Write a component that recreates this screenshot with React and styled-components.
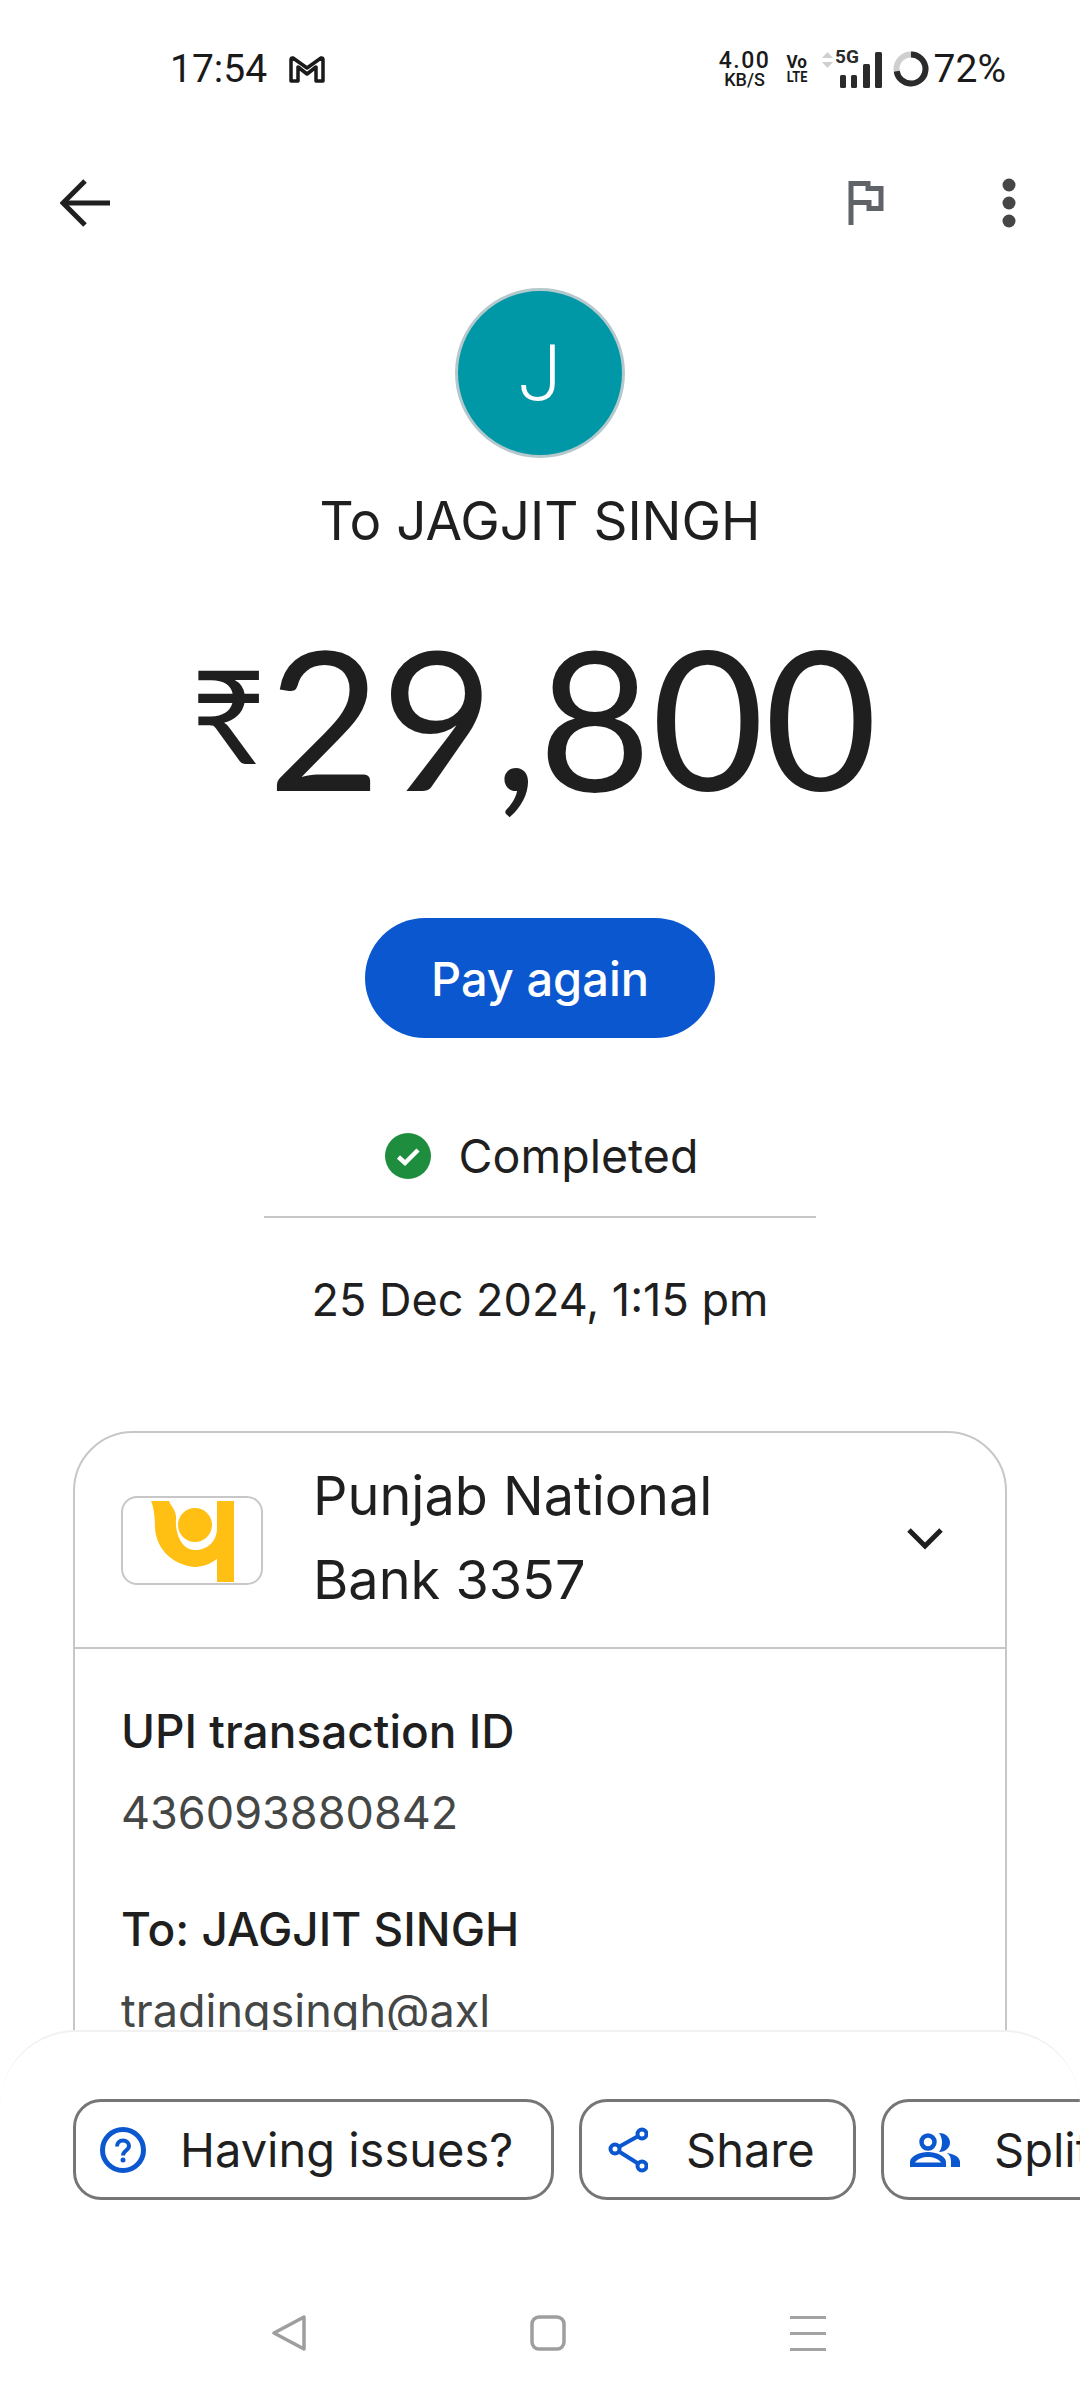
import React from 'react';
import styled, { createGlobalStyle } from 'styled-components';

const Global = createGlobalStyle`
  html, body { margin: 0; padding: 0; background: #fff; }
  body { font-family: Inter, Roboto, "Liberation Sans", sans-serif; color: #1f1f1f; }
`;

const Screen = styled.div`
  position: relative;
  width: 1080px;
  height: 2400px;
  overflow: hidden;
  background: #fff;
`;

const StatusBar = styled.div`
  height: 138px;
  padding: 0 74px 0 170px;
  box-sizing: border-box;
  display: flex;
  align-items: center;
  color: #1a1a1a;
  font-family: Roboto, sans-serif;
`;

const Clock = styled.span`
  font-size: 39px;
  margin-right: 22px;
`;

const StatusRight = styled.div`
  margin-left: auto;
  display: flex;
  align-items: center;
`;

const StackText = styled.div`
  display: flex;
  flex-direction: column;
  align-items: center;
  width: ${(p) => p.$width}px;
  margin-right: ${(p) => p.$gap}px;
`;

const StackLine = styled.span`
  font-size: ${(p) => p.$size}px;
  font-weight: ${(p) => p.$weight || 500};
  line-height: ${(p) => p.$height}px;
  letter-spacing: ${(p) => p.$spacing || 0}px;
  transform: scaleX(${(p) => p.$squeeze || 1});
`;

const Battery = styled.span`
  font-size: 39px;
  margin-left: 5px;
`;

const Toolbar = styled.div`
  height: 132px;
  padding: 0 64px 0 60px;
  box-sizing: border-box;
  display: flex;
  align-items: center;
  margin-top: -1px;
`;

const FlagButton = styled.div`
  margin-left: auto;
  margin-right: 115px;
  display: flex;
`;

const Hero = styled.div`
  display: flex;
  flex-direction: column;
  align-items: center;
  margin-top: 19px;
`;

const Avatar = styled.div`
  width: 164px;
  height: 164px;
  border-radius: 50%;
  border: 3px solid #b5c9cd;
  background: #0097a7;
  color: #fff;
  font-size: 78px;
  font-weight: 300;
  font-family: Roboto, sans-serif;
  display: flex;
  align-items: center;
  justify-content: center;
`;

const Payee = styled.div`
  margin-top: 32px;
  font-size: 53px;
  line-height: 62px;
`;

const Amount = styled.div`
  margin-top: 48px;
  height: 232px;
  padding-right: 12px;
  font-family: Lato, Roboto, sans-serif;
  font-size: 195px;
  line-height: 232px;
  color: #1f1f1f;
  display: flex;
  align-items: baseline;
`;

const Rupee = styled.span`
  font-size: 130px;
  margin-right: 2px;
  position: relative;
  top: -27px;
`;

const PayButton = styled.div`
  margin-top: 86px;
  width: 350px;
  height: 120px;
  border-radius: 60px;
  background: #0b57d0;
  color: #fff;
  font-size: 47px;
  font-weight: 500;
  display: flex;
  align-items: center;
  justify-content: center;
`;

const StatusRow = styled.div`
  margin-top: 88px;
  height: 60px;
  width: 552px;
  padding-left: 3px;
  box-sizing: border-box;
  display: flex;
  align-items: center;
  justify-content: center;
  gap: 28px;
  font-size: 46.5px;
`;

const Rule = styled.div`
  margin-top: 30px;
  width: 552px;
  height: 2px;
  background: #c7c7c7;
`;

const DateText = styled.div`
  margin-top: 54px;
  font-size: 45px;
  line-height: 56px;
`;

const Card = styled.div`
  margin: 103px 73px 0;
  height: 900px;
  box-sizing: border-box;
  border: 2px solid #c7c7c7;
  border-radius: 60px 60px 0 0;
`;

const BankRow = styled.div`
  height: 216px;
  box-sizing: border-box;
  padding: 0 62px 0 46px;
  display: flex;
  align-items: center;
  border-bottom: 2px solid #c7c7c7;
`;

const BankLogo = styled.div`
  width: 142px;
  height: 89px;
  box-sizing: border-box;
  border: 2px solid #c7c7c7;
  border-radius: 16px;
  display: flex;
  justify-content: center;
  flex-shrink: 0;
`;

const BankName = styled.div`
  margin: 0 0 4px 50px;
  width: 520px;
  font-size: 54px;
  line-height: 84px;
`;

const Chevron = styled.div`
  margin: 0 0 4px auto;
  display: flex;
`;

const Details = styled.div`
  padding: 0 46px;
`;

const DetailLabel = styled.div`
  margin-top: ${(p) => p.$top}px;
  font-size: 46px;
  font-weight: 500;
  line-height: 56px;
`;

const DetailValue = styled.div`
  margin-top: 26px;
  font-size: 45px;
  line-height: 56px;
  color: #444746;
`;

const Sheet = styled.div`
  position: absolute;
  left: 0;
  right: 0;
  top: 2030px;
  bottom: 0;
  background: #fff;
  border-top: 2px solid #f1f1f1;
  border-radius: 76px 76px 0 0;
  overflow: hidden;
`;

const Chips = styled.div`
  margin-top: 67px;
  padding-left: 73px;
  display: flex;
  gap: 25px;
  width: 1400px;
`;

const Chip = styled.div`
  height: 101px;
  width: ${(p) => p.$width}px;
  box-sizing: border-box;
  padding-left: 24px;
  border: 3px solid #747775;
  border-radius: 28px;
  display: flex;
  align-items: center;
  gap: ${(p) => p.$gap}px;
  font-size: 47px;
  flex-shrink: 0;
`;

const NavBar = styled.div`
  margin-top: 115px;
  display: flex;
  align-items: center;
  padding-left: 272px;
  gap: 224px;
`;

const Speed = () => (
  <StackText $width={52} $gap={14}>
    <StackLine $size={23} $height={20} $spacing={1.5}>4.00</StackLine>
    <StackLine $size={18} $height={17}>KB/S</StackLine>
  </StackText>
);

const Volte = () => (
  <StackText $width={24} $gap={13}>
    <StackLine $size={18} $weight={700} $height={16} $squeeze={0.95}>Vo</StackLine>
    <StackLine $size={15} $weight={700} $height={14} $squeeze={0.85}>LTE</StackLine>
  </StackText>
);

const MailIcon = () => (
  <svg width="36" height="27" viewBox="0 0 36 27" fill="none" stroke="#1a1a1a" strokeWidth="3.5" strokeLinejoin="round">
    <path d="M2 25V3.500q0-2 2-1.500L18 12 32 2q2-.5 2 1.500V25H27V11L18 18 9 11V25Z" />
  </svg>
);

const SignalIcon = () => (
  <svg width="71" height="46" viewBox="0 0 71 46" fill="#2b2b2b">
    <path d="M0 12 5.500 6 11 12Z M0 16 5.500 22 11 16Z" fill="#cfcfcf" />
    <text x="13" y="17" fontFamily="Roboto" fontSize="19" fontWeight="700">5G</text>
    <rect x="18" y="29" width="6" height="13" rx="1.500" />
    <rect x="29" y="29" width="6" height="13" rx="1.500" />
    <rect x="41" y="18" width="7" height="24" rx="1.500" />
    <rect x="53" y="6" width="7" height="36" rx="1.500" />
  </svg>
);

const BatteryRing = () => {
  const r = 14.5;
  const c = 2 * Math.PI * r;
  return (
    <svg width="36" height="36" viewBox="0 0 36 36" fill="none" strokeWidth="6">
      <circle cx="18" cy="18" r={r} stroke="#cfcfcf" />
      <circle cx="18" cy="18" r={r} stroke="#2b2b2b" strokeDasharray={`${c * 0.72} ${c}`} transform="rotate(-90 18 18)" />
    </svg>
  );
};

const BackIcon = () => (
  <svg width="50" height="48" viewBox="0 0 50 48" fill="none" stroke="#1f1f1f" strokeWidth="5">
    <path d="M50 24H4" />
    <path d="M25 2 3 24l22 22" />
  </svg>
);

const FlagIcon = () => (
  <svg width="40" height="44" viewBox="0 0 40 44" fill="none" stroke="#5f6368" strokeWidth="5">
    <path d="M4 44V2.500H21V7.500H34V27.500H22V21.500H4" />
  </svg>
);

const MoreIcon = () => (
  <svg width="14" height="50" viewBox="0 0 14 50" fill="#444746">
    <circle cx="7" cy="7" r="6.500" />
    <circle cx="7" cy="25" r="6.500" />
    <circle cx="7" cy="43" r="6.500" />
  </svg>
);

const CheckIcon = () => (
  <svg width="46" height="46" viewBox="0 0 46 46">
    <circle cx="23" cy="23" r="23" fill="#1e8e3e" />
    <path d="M13.500 24 20 30 33 17" fill="none" stroke="#fff" strokeWidth="4.500" />
  </svg>
);

const PnbLogo = () => (
  <svg width="138" height="85" viewBox="0 0 138 85" fill="#ffc013">
    <circle cx="72" cy="27" r="17" />
    <path d="M28 3H46C48 9 54 12 53 22 52 30 56 52 72 52 84 52 94 44 94 30V3H111V84H94V61C86 67 78 69 71 69 46 66 33 48 32 30 32 20 31 10 28 3Z" />
  </svg>
);

const ChevronIcon = () => (
  <svg width="36" height="24" viewBox="0 0 36 24" fill="none" stroke="#1f1f1f" strokeWidth="5">
    <path d="M2 4 18 20 34 4" />
  </svg>
);

const HelpIcon = () => (
  <svg width="46" height="46" viewBox="0 0 46 46" fill="none" stroke="#0b57d0" strokeWidth="5">
    <circle cx="23" cy="23" r="20.500" />
    <path d="M17 19.500C17 16 19.500 13.500 23 13.500S29 16 29 19C29 23.500 23 23.500 23 28.500" strokeWidth="4" />
    <circle cx="23" cy="33" r="2.500" fill="#0b57d0" stroke="none" />
  </svg>
);

const ShareIcon = () => (
  <svg width="42" height="46" viewBox="0 0 42 46" fill="none" stroke="#0b57d0" strokeWidth="4">
    <path d="M9 22 36 7M9 22 36 39" />
    <circle cx="9" cy="22" r="4.500" fill="#fff" />
    <circle cx="36" cy="7" r="4.500" fill="#fff" />
    <circle cx="36" cy="39" r="4.500" fill="#fff" />
  </svg>
);

const PeopleIcon = () => (
  <svg width="52" height="38" viewBox="0 0 52 38" fill="#0b57d0">
    <circle cx="20" cy="11" r="6.500" fill="none" stroke="#0b57d0" strokeWidth="4.500" />
    <path d="M2 36V31C2 25 12 21 20 21S38 25 38 31V36ZM7 31.500H33C31 28 25 26 20 26S9 28 7 31.500Z" fillRule="evenodd" />
    <path d="M31 2C38 2 42 7 42 11.500S38 21 31 21C35 16 35 7 31 2Z" />
    <path d="M39 22C46 23 52 26 52 31V36H43V31C43 27 42 24 39 22Z" />
  </svg>
);

const NavBack = () => (
  <svg width="34" height="36" viewBox="0 0 34 36" fill="none" stroke="#9e9e9e" strokeWidth="3.500" strokeLinejoin="round">
    <path d="M32 2V34L2 18Z" />
  </svg>
);

const NavHome = () => (
  <svg width="36" height="36" viewBox="0 0 36 36" fill="none" stroke="#9e9e9e" strokeWidth="3.500">
    <rect x="2" y="2" width="32" height="32" rx="7" />
  </svg>
);

const NavMenu = () => (
  <svg width="36" height="36" viewBox="0 0 36 36" fill="#a3a3a3">
    <rect y="1" width="36" height="3" />
    <rect y="17" width="36" height="3" />
    <rect y="33" width="36" height="3" />
  </svg>
);

function App() {
  return (
    <Screen>
      <Global />
      <StatusBar>
        <Clock>17:54</Clock>
        <MailIcon />
        <StatusRight>
          <Speed />
          <Volte />
          <SignalIcon />
          <BatteryRing />
          <Battery>72%</Battery>
        </StatusRight>
      </StatusBar>
      <Toolbar>
        <BackIcon />
        <FlagButton><FlagIcon /></FlagButton>
        <MoreIcon />
      </Toolbar>
      <Hero>
        <Avatar>J</Avatar>
        <Payee>To JAGJIT SINGH</Payee>
        <Amount><Rupee>₹</Rupee>29,800</Amount>
        <PayButton>Pay again</PayButton>
        <StatusRow><CheckIcon />Completed</StatusRow>
        <Rule />
        <DateText>25 Dec 2024, 1:15 pm</DateText>
      </Hero>
      <Card>
        <BankRow>
          <BankLogo><PnbLogo /></BankLogo>
          <BankName>Punjab National Bank 3357</BankName>
          <Chevron><ChevronIcon /></Chevron>
        </BankRow>
        <Details>
          <DetailLabel $top={54}>UPI transaction ID</DetailLabel>
          <DetailValue>436093880842</DetailValue>
          <DetailLabel $top={60}>To: JAGJIT SINGH</DetailLabel>
          <DetailValue>tradingsingh@axl</DetailValue>
        </Details>
      </Card>
      <Sheet>
        <Chips>
          <Chip $width={481} $gap={34}><HelpIcon />Having issues?</Chip>
          <Chip $width={277} $gap={38}><ShareIcon />Share</Chip>
          <Chip $width={300} $gap={34}><PeopleIcon />Split</Chip>
        </Chips>
        <NavBar>
          <NavBack />
          <NavHome />
          <NavMenu />
        </NavBar>
      </Sheet>
    </Screen>
  );
}

export default App;
